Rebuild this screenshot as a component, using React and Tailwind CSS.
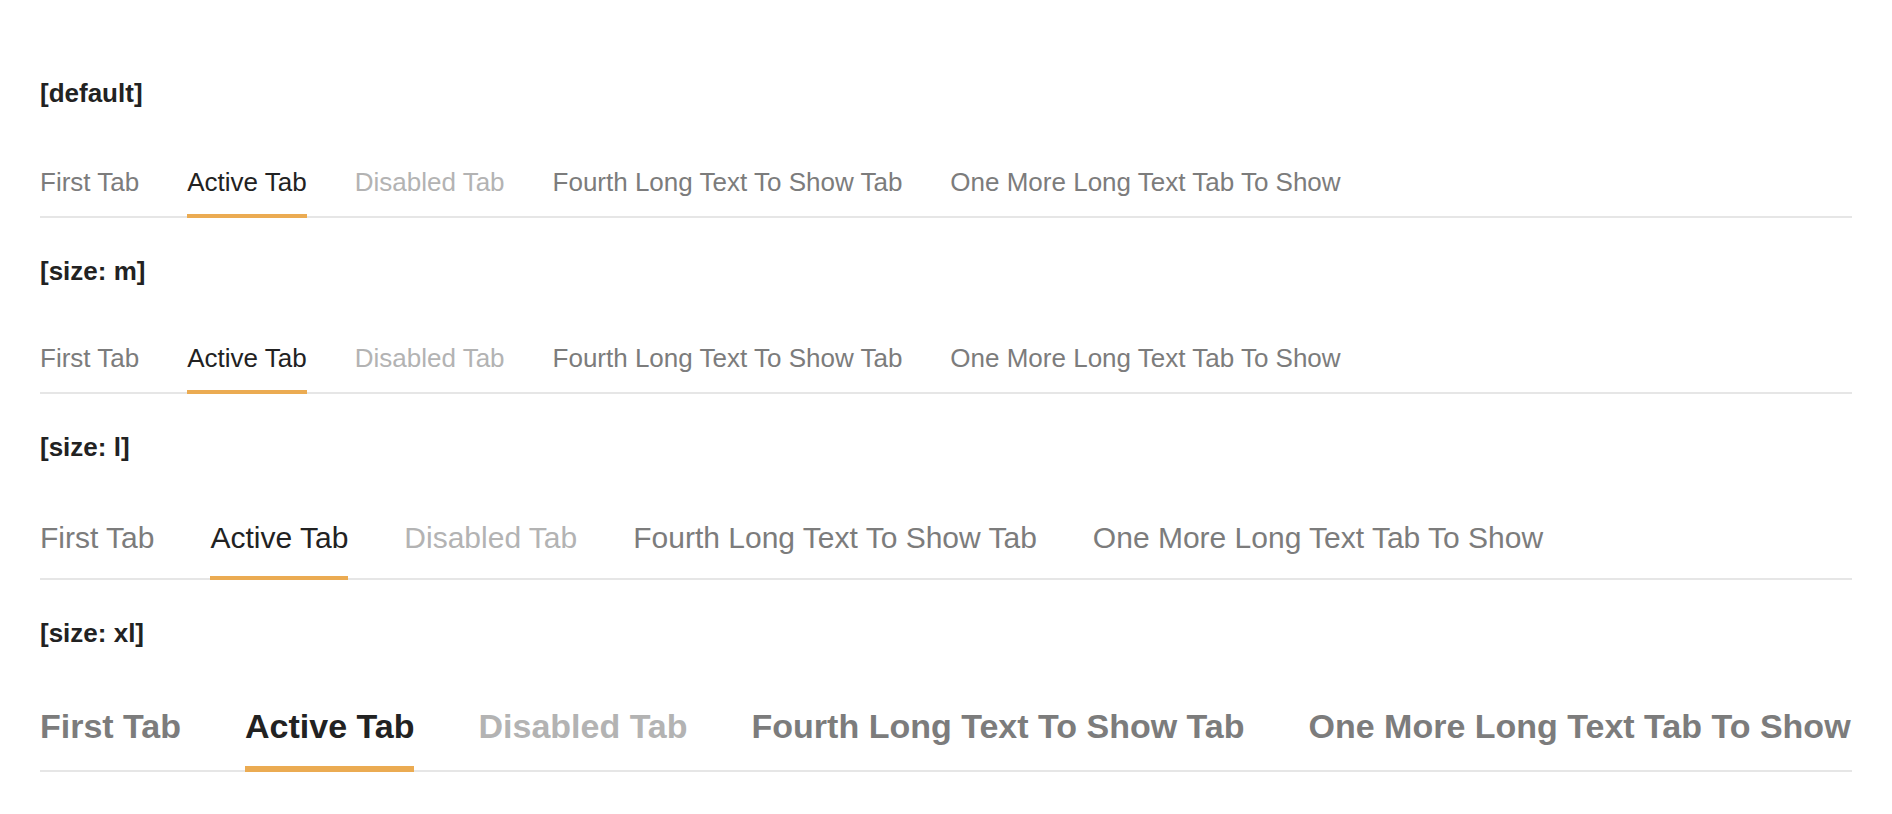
const TABS = [
  { label: 'First Tab' },
  { label: 'Active Tab', active: true },
  { label: 'Disabled Tab', disabled: true },
  { label: 'Fourth Long Text To Show Tab' },
  { label: 'One More Long Text Tab To Show' },
];

const SIZES = {
  default: {
    list: 'gap-12 text-[26px] leading-[30px] font-normal',
    item: 'pb-[17px] border-b-4',
  },
  m: {
    list: 'gap-12 text-[26px] leading-[30px] font-normal',
    item: 'pb-[17px] border-b-4',
  },
  l: {
    list: 'gap-14 text-[30px] leading-[34px] font-normal',
    item: 'pb-[21px] border-b-4',
  },
  xl: {
    list: 'gap-16 text-[34px] leading-[40px] font-bold',
    item: 'pb-[20px] border-b-[6px]',
  },
};

function Tabs({ size }) {
  const s = SIZES[size];
  return (
    <div className={`flex border-b-2 border-[#e6e6e6] ${s.list}`}>
      {TABS.map((tab) => {
        let color = 'text-[#7c7c7c]';
        if (tab.active) color = 'text-[#222222]';
        if (tab.disabled) color = 'text-[#b3b3b3]';
        return (
          <div
            key={tab.label}
            className={`-mb-[2px] whitespace-nowrap ${s.item} ${color} ${
              tab.active ? 'border-[#ebab52]' : 'border-transparent'
            }`}
          >
            {tab.label}
          </div>
        );
      })}
    </div>
  );
}

function Section({ title, size, labelGap }) {
  return (
    <section>
      <h2 className={`text-[26px] font-bold leading-[30px] text-[#222222] ${labelGap}`}>{title}</h2>
      <Tabs size={size} />
    </section>
  );
}

export default function App() {
  return (
    <div
      className="min-h-screen bg-white px-10 pt-[78px]"
      style={{ fontFamily: '"Liberation Sans", Arial, sans-serif' }}
    >
      <div className="flex flex-col gap-[38px]">
        <Section title="[default]" size="default" labelGap="mb-[59px]" />
        <Section title="[size: m]" size="m" labelGap="mb-[57px]" />
        <Section title="[size: l]" size="l" labelGap="mb-[59px]" />
        <Section title="[size: xl]" size="xl" labelGap="mb-[58px]" />
      </div>
    </div>
  );
}
